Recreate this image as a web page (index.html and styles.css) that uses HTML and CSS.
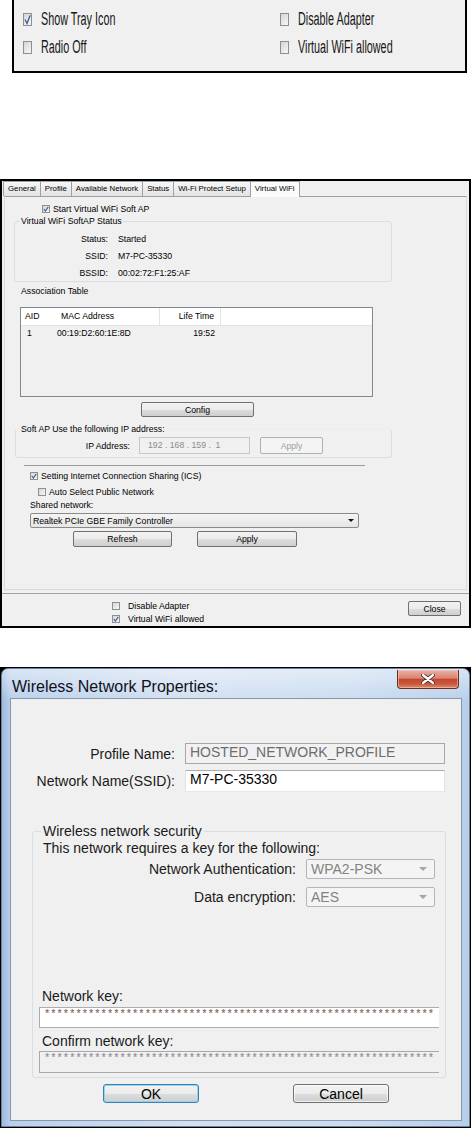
FILE: index.html
```html
<!DOCTYPE html>
<html lang="en">
<head>
  <meta charset="UTF-8" />
  <meta name="viewport" content="width=device-width, initial-scale=1" />
  <title>Virtual WiFi</title>
  <link rel="stylesheet" href="styles.css">
</head>
<body>
  <div class="tray">
    <div class="opt"><span class="cb"><svg viewBox="0 0 7 11" preserveAspectRatio="none"><path d="M1 5.5 L3 9.5 L6.2 1.2" fill="none" stroke="#3d5c9c" stroke-width="1.3"/></svg></span><span class="tx">Show Tray Icon</span></div>
    <div class="opt"><span class="cb"></span><span class="tx">Disable Adapter</span></div>
    <div class="opt"><span class="cb"></span><span class="tx">Radio Off</span></div>
    <div class="opt"><span class="cb"></span><span class="tx">Virtual WiFi allowed</span></div>
  </div>

  <div class="dlg">
    <div class="tabs">
      <span class="tab">General</span>
      <span class="tab">Profile</span>
      <span class="tab">Available Network</span>
      <span class="tab">Status</span>
      <span class="tab">Wi-Fi Protect Setup</span>
      <span class="tab active">Virtual WiFi</span>
    </div>
    <div class="page">
      <div class="row start"><span class="cb sm"><svg viewBox="0 0 6 6"><path d="M0.8 3 L2.4 5 L5.3 0.8" fill="none" stroke="#4a5f97" stroke-width="1.2"/></svg></span>Start Virtual WiFi Soft AP</div>

      <fieldset class="grp status">
        <legend>Virtual WiFi SoftAP Status</legend>
        <div class="kv">
          <span class="k">Status:</span><span>Started</span>
          <span class="k">SSID:</span><span>M7-PC-35330</span>
          <span class="k">BSSID:</span><span>00:02:72:F1:25:AF</span>
        </div>
      </fieldset>

      <div class="cap">Association Table</div>
      <div class="list">
        <div class="lhead">
          <span class="c1">AID</span><span class="c2">MAC Address</span><span class="c3">Life Time</span>
        </div>
        <div class="lrow">
          <span class="c1">1</span><span class="c2">00:19:D2:60:1E:8D</span><span class="c3">19:52</span>
        </div>
      </div>

      <button class="btn config" type="button">Config</button>

      <fieldset class="grp ip">
        <legend>Soft AP Use the following IP address:</legend>
        <div class="iprow">
          <span class="iplabel">IP Address:</span>
          <span class="ipbox">192 . 168 . 159 . &nbsp;1</span>
          <button class="btn off ipapply" type="button">Apply</button>
        </div>
      </fieldset>

      <div class="sep"></div>

      <div class="row ics"><span class="cb sm"><svg viewBox="0 0 6 6"><path d="M0.8 3 L2.4 5 L5.3 0.8" fill="none" stroke="#4a5f97" stroke-width="1.2"/></svg></span>Setting Internet Connection Sharing (ICS)</div>
      <div class="row auto"><span class="cb sm"></span>Auto Select Public Network</div>
      <div class="cap shared">Shared network:</div>
      <div class="combo">Realtek PCIe GBE Family Controller<span class="arrow"></span></div>
      <div class="btnrow">
        <button class="btn refresh" type="button">Refresh</button>
        <button class="btn apply" type="button">Apply</button>
      </div>
    </div>

    <div class="foot">
      <div class="footopts">
        <div class="row"><span class="cb sm"></span>Disable Adapter</div>
        <div class="row"><span class="cb sm"><svg viewBox="0 0 6 6"><path d="M0.8 3 L2.4 5 L5.3 0.8" fill="none" stroke="#4a5f97" stroke-width="1.2"/></svg></span>Virtual WiFi allowed</div>
      </div>
      <button class="btn close" type="button">Close</button>
    </div>
  </div>

  <div class="shot">
    <div class="win">
      <div class="titlebar">
        <span class="title">Wireless Network Properties:</span>
        <span class="xbtn"><svg viewBox="0 0 14 10" width="14" height="10"><path d="M2 1 L12 9 M12 1 L2 9" stroke="#3f2a2a" stroke-width="4" stroke-linecap="round"/><path d="M2 1 L12 9 M12 1 L2 9" stroke="#fff" stroke-width="2.4" stroke-linecap="round"/></svg></span>
      </div>
      <div class="client">
        <div class="names">
          <span class="lbl">Profile Name:</span>
          <span class="fld dis">HOSTED_NETWORK_PROFILE</span>
          <span class="lbl">Network Name(SSID):</span>
          <span class="fld ssid">M7-PC-35330</span>
        </div>

        <fieldset class="sec">
          <legend>Wireless network security</legend>
          <div class="req">This network requires a key for the following:</div>
          <div class="sel">
            <span class="lbl">Network Authentication:</span>
            <span class="drop">WPA2-PSK<span class="tri"></span></span>
            <span class="lbl">Data encryption:</span>
            <span class="drop">AES<span class="tri"></span></span>
          </div>
          <div class="keylbl">Network key:</div>
          <div class="key">**************************************************************</div>
          <div class="keylbl confirm">Confirm network key:</div>
          <div class="key dis">**************************************************************</div>
        </fieldset>

        <div class="actions">
          <button class="wbtn ok" type="button">OK</button>
          <button class="wbtn cancel" type="button">Cancel</button>
        </div>
      </div>
    </div>
  </div>
</body>
</html>
```

FILE: styles.css
```css
body {
  margin: 0;
  width: 471px;
  background: #fff;
  font-family: "Liberation Sans", Arial, sans-serif;
  color: #000;
}

/* ---------- tray options strip ---------- */
.tray {
  margin-left: 12px;
  width: 455px;
  height: 73px;
  box-sizing: border-box;
  border: 2px solid #000;
  border-top: 0;
  background: #f0f0f0;
  padding: 5px 0 0 9px;
  display: grid;
  grid-template-columns: 257px 1fr;
  grid-auto-rows: 28px;
}

.opt {
  display: flex;
  align-items: center;
}

.tray .cb {
  width: 9px;
  height: 13px;
  margin-right: 9px;
}

.tray .tx {
  font-size: 18px;
  color: #161616;
  white-space: nowrap;
  transform: scaleX(0.6);
  transform-origin: 0 50%;
}

.cb {
  flex: none;
  box-sizing: border-box;
  border: 1px solid #8e8f8f;
  background: linear-gradient(135deg, #d6d6d6, #f7f7f7);
}

.cb svg {
  display: block;
  width: 100%;
  height: 100%;
}

.cb.sm {
  width: 8px;
  height: 8px;
  margin-right: 3px;
}

/* ---------- utility dialog ---------- */
.dlg {
  margin-top: 106px;
  width: 471px;
  height: 449px;
  box-sizing: border-box;
  border: 2px solid #000;
  background: #f0f0f0;
  font-size: 8.7px;
  line-height: 10px;
}

.tabs {
  display: flex;
  height: 15px;
  margin-left: 1px;
}

.tab {
  height: 15px;
  box-sizing: border-box;
  padding: 0 4px;
  border: 1px solid #9b9fa6;
  border-right: 0;
  border-bottom: 0;
  background: linear-gradient(#f7f7f7, #e3e3e3);
  font-size: 7.8px;
  line-height: 14px;
  white-space: nowrap;
}

.tab.active {
  position: relative;
  z-index: 1;
  height: 16px;
  background: #fbfbfb;
  border-right: 1px solid #9b9fa6;
}

.page {
  margin: 0 2px;
  height: 394px;
  box-sizing: border-box;
  border: 1px solid #dadada;
  border-top-color: #9b9fa6;
}

.row {
  display: flex;
  align-items: center;
  height: 11px;
  white-space: nowrap;
}

.start { margin: 6px 0 0 37px; }

.grp {
  margin: 0;
  padding: 0;
  border: 1px solid #d5dfe5;
  border-radius: 3px;
  box-sizing: border-box;
  min-inline-size: 0;
}

.grp legend {
  padding: 0 1px;
  line-height: 10px;
}

.status {
  margin: 2px 0 0 9px;
  width: 378px;
  height: 66px;
}

.status legend { margin-left: 5px; }

.kv {
  display: grid;
  grid-template-columns: 93px auto;
  column-gap: 10px;
  grid-auto-rows: 17px;
  align-items: center;
  padding-top: 4px;
}

.kv .k { text-align: right; }

.cap {
  margin: 4px 0 0 16px;
  white-space: nowrap;
}

.list {
  margin: 11px 0 0 15px;
  width: 353px;
  height: 90px;
  box-sizing: border-box;
  border: 1px solid #828790;
  background: #f0f0f0;
}

.lhead, .lrow {
  display: flex;
  white-space: nowrap;
}

.lhead {
  height: 18px;
  box-sizing: border-box;
  border-bottom: 1px solid #e3e3e3;
  background: #fff;
  line-height: 17px;
}

.lrow {
  height: 14px;
  line-height: 14px;
}

.c1 { width: 36px; box-sizing: border-box; padding-left: 4px; }
.c2 { width: 103px; box-sizing: border-box; padding-left: 4px; }
.c3 { width: 61px; box-sizing: border-box; padding-right: 6px; text-align: right; }
.lhead .c2, .lhead .c3 { border-right: 1px solid #e3e3e3; }
.lrow .c1 { padding-left: 6px; }
.lrow .c2 { padding-left: 0; }

.btn {
  display: block;
  box-sizing: border-box;
  padding: 0;
  border: 1px solid #707070;
  border-radius: 2px;
  background: linear-gradient(#f2f2f2 0%, #ebebeb 50%, #dddddd 51%, #cfcfcf 100%);
  font: inherit;
  color: #000;
}

.btn.off {
  border-color: #adb2b5;
  background: #f4f4f4;
  color: #a0a0a0;
}

.config {
  margin: 5px 0 0 136px;
  width: 113px;
  height: 15px;
}

.ip {
  margin: 7px 0 0 10px;
  width: 377px;
  height: 34px;
  border-top-color: #ececec;
}

.ip legend { margin-left: 4px; }

.iprow {
  display: flex;
  align-items: center;
  padding-top: 3px;
  white-space: nowrap;
}

.iplabel {
  width: 114px;
  text-align: right;
}

.ipbox {
  margin-left: 9px;
  width: 111px;
  height: 17px;
  box-sizing: border-box;
  border: 1px solid #c5c8cb;
  padding-left: 8px;
  line-height: 15px;
  color: #8c8c8c;
}

.ipapply {
  margin-left: 10px;
  width: 63px;
  height: 17px;
}

.sep {
  margin: 7px 0 0 19px;
  width: 341px;
  border-top: 1px solid #9d9d9d;
}

.ics { margin: 4px 0 0 25px; }
.auto { margin: 5px 0 0 33px; }
.shared { margin: 3px 0 0 25px; }

.combo {
  display: flex;
  align-items: center;
  justify-content: space-between;
  margin: 3px 0 0 25px;
  width: 329px;
  height: 15px;
  box-sizing: border-box;
  padding: 0 4px 0 2px;
  border: 1px solid #8a8a8a;
  border-radius: 2px;
  background: linear-gradient(#f4f4f4, #e6e6e6);
  white-space: nowrap;
}

.arrow {
  width: 0;
  height: 0;
  border-left: 3px solid transparent;
  border-right: 3px solid transparent;
  border-top: 3px solid #111;
}

.btnrow {
  display: flex;
  margin: 3px 0 0 68px;
  gap: 25px;
}

.refresh { width: 99px; height: 16px; }
.apply { width: 100px; height: 16px; }

.foot {
  margin-top: 3px;
  height: 33px;
  box-sizing: border-box;
  border-top: 1px solid #a0a0a0;
  display: flex;
}

.footopts {
  margin: 5px 0 0 110px;
}

.footopts .row {
  height: 13px;
}

.footopts .cb.sm { margin-right: 8px; }

.close {
  margin: 7px 8px 0 auto;
  width: 53px;
  height: 15px;
}

/* ---------- wireless properties window ---------- */
.shot {
  margin-top: 39px;
  height: 461px;
  box-sizing: border-box;
  padding: 1px;
  background: #000;
}

.win {
  height: 459px;
  box-sizing: border-box;
  padding: 0 7px 5px 8px;
  border: 1px solid #6f8299;
  border-radius: 7px 7px 0 0;
  background:
    linear-gradient(180deg, rgba(255, 255, 255, 0.45), rgba(255, 255, 255, 0) 32px),
    linear-gradient(90deg, #9fbbe0 0, #b9d0ec 9px, #d2e0f1 40%, #cadcf0 75%, #b7cfeb 100%);
}

.titlebar {
  display: flex;
  align-items: flex-start;
  justify-content: space-between;
  height: 29px;
}

.title {
  margin: 10px 0 0 2px;
  font-size: 16px;
  line-height: 16px;
  color: #101020;
  white-space: nowrap;
}

.xbtn {
  display: flex;
  align-items: center;
  justify-content: center;
  margin: 1px 3px 0 0;
  width: 62px;
  height: 19px;
  box-sizing: border-box;
  border: 1px solid #6e2b20;
  border-top: 0;
  border-radius: 0 0 4px 4px;
  background: linear-gradient(#eab0a2, #d98472 45%, #c4472d 52%, #c95a3d 78%, #df8b6d 100%);
  box-shadow: inset 0 0 0 1px rgba(255, 220, 210, 0.45);
}

.xbtn svg { display: block; }

.client {
  height: 423px;
  box-sizing: border-box;
  border: 1px solid #8796ab;
  background: #f0f0f0;
  padding-top: 44px;
  font-size: 14px;
  color: #1a1a1a;
}

.names {
  display: grid;
  grid-template-columns: 164px 260px;
  grid-template-rows: 21px 22px;
  column-gap: 10px;
  row-gap: 6px;
}

.lbl {
  align-self: center;
  text-align: right;
  white-space: nowrap;
}

.fld {
  box-sizing: border-box;
  border: 1px solid #abadb3;
  padding: 1px 4px 0;
  line-height: 14px;
  white-space: nowrap;
  overflow: hidden;
}

.fld.dis {
  border-color: #a7a7a7;
  background: #f1f1f1;
  color: #6d6d6d;
}

.ssid {
  background: #fff;
  border-color: #abadb3 #e2e3ea #e3e9ef;
  color: #000;
}

.sec {
  margin: 31px 0 0 21px;
  padding: 0;
  width: 414px;
  height: 255px;
  box-sizing: border-box;
  border: 1px solid #d5dfe5;
  border-radius: 3px;
  min-inline-size: 0;
}

.sec legend {
  margin-left: 8px;
  padding: 0 2px;
  line-height: 16px;
}

.req {
  margin: 1px 0 0 10px;
  line-height: 16px;
  white-space: nowrap;
}

.sel {
  display: grid;
  grid-template-columns: 253px 129px;
  grid-auto-rows: 20px;
  column-gap: 10px;
  row-gap: 8px;
  margin: 3px 0 0 10px;
}

.drop {
  display: flex;
  align-items: center;
  justify-content: space-between;
  box-sizing: border-box;
  padding: 0 7px 0 4px;
  border: 1px solid #b3b6b9;
  border-radius: 2px;
  background: #f4f4f4;
  color: #838383;
}

.tri {
  width: 0;
  height: 0;
  border-left: 4px solid transparent;
  border-right: 4px solid transparent;
  border-top: 4px solid #a6a6a6;
}

.keylbl {
  margin: 81px 0 0 9px;
  line-height: 16px;
}

.keylbl.confirm { margin-top: 5px; }

.key {
  margin: 3px 0 0 6px;
  width: 400px;
  height: 21px;
  box-sizing: border-box;
  border: 1px solid #abadb3;
  border-right: 0;
  background: #fff;
  padding-left: 5px;
  font-size: 10px;
  line-height: 11px;
  letter-spacing: 2.4px;
  color: #7c6f8a;
  text-shadow: 0.5px 0 #d79a55;
  white-space: nowrap;
  overflow: hidden;
}

.key.dis {
  margin-top: 2px;
  height: 22px;
  border-color: #a9a9a9;
  background: #f0f0f0;
  color: #8d93b0;
  text-shadow: 0.5px 0 #c9b08c;
}

.actions {
  display: flex;
  margin: 6px 0 0 92px;
  gap: 94px;
}

.wbtn {
  width: 96px;
  height: 19px;
  box-sizing: border-box;
  padding: 0;
  border: 1px solid #707070;
  border-radius: 3px;
  background: linear-gradient(#f2f2f2 0%, #ebebeb 50%, #dddddd 51%, #cfcfcf 100%);
  box-shadow: inset 0 0 0 1px rgba(255, 255, 255, 0.7);
  font: 14px "Liberation Sans", Arial, sans-serif;
  color: #000;
  line-height: 16px;
}

.wbtn.ok {
  border-color: #3c7fb1;
  box-shadow: inset 0 0 0 1px #8fd3f5;
}
```
